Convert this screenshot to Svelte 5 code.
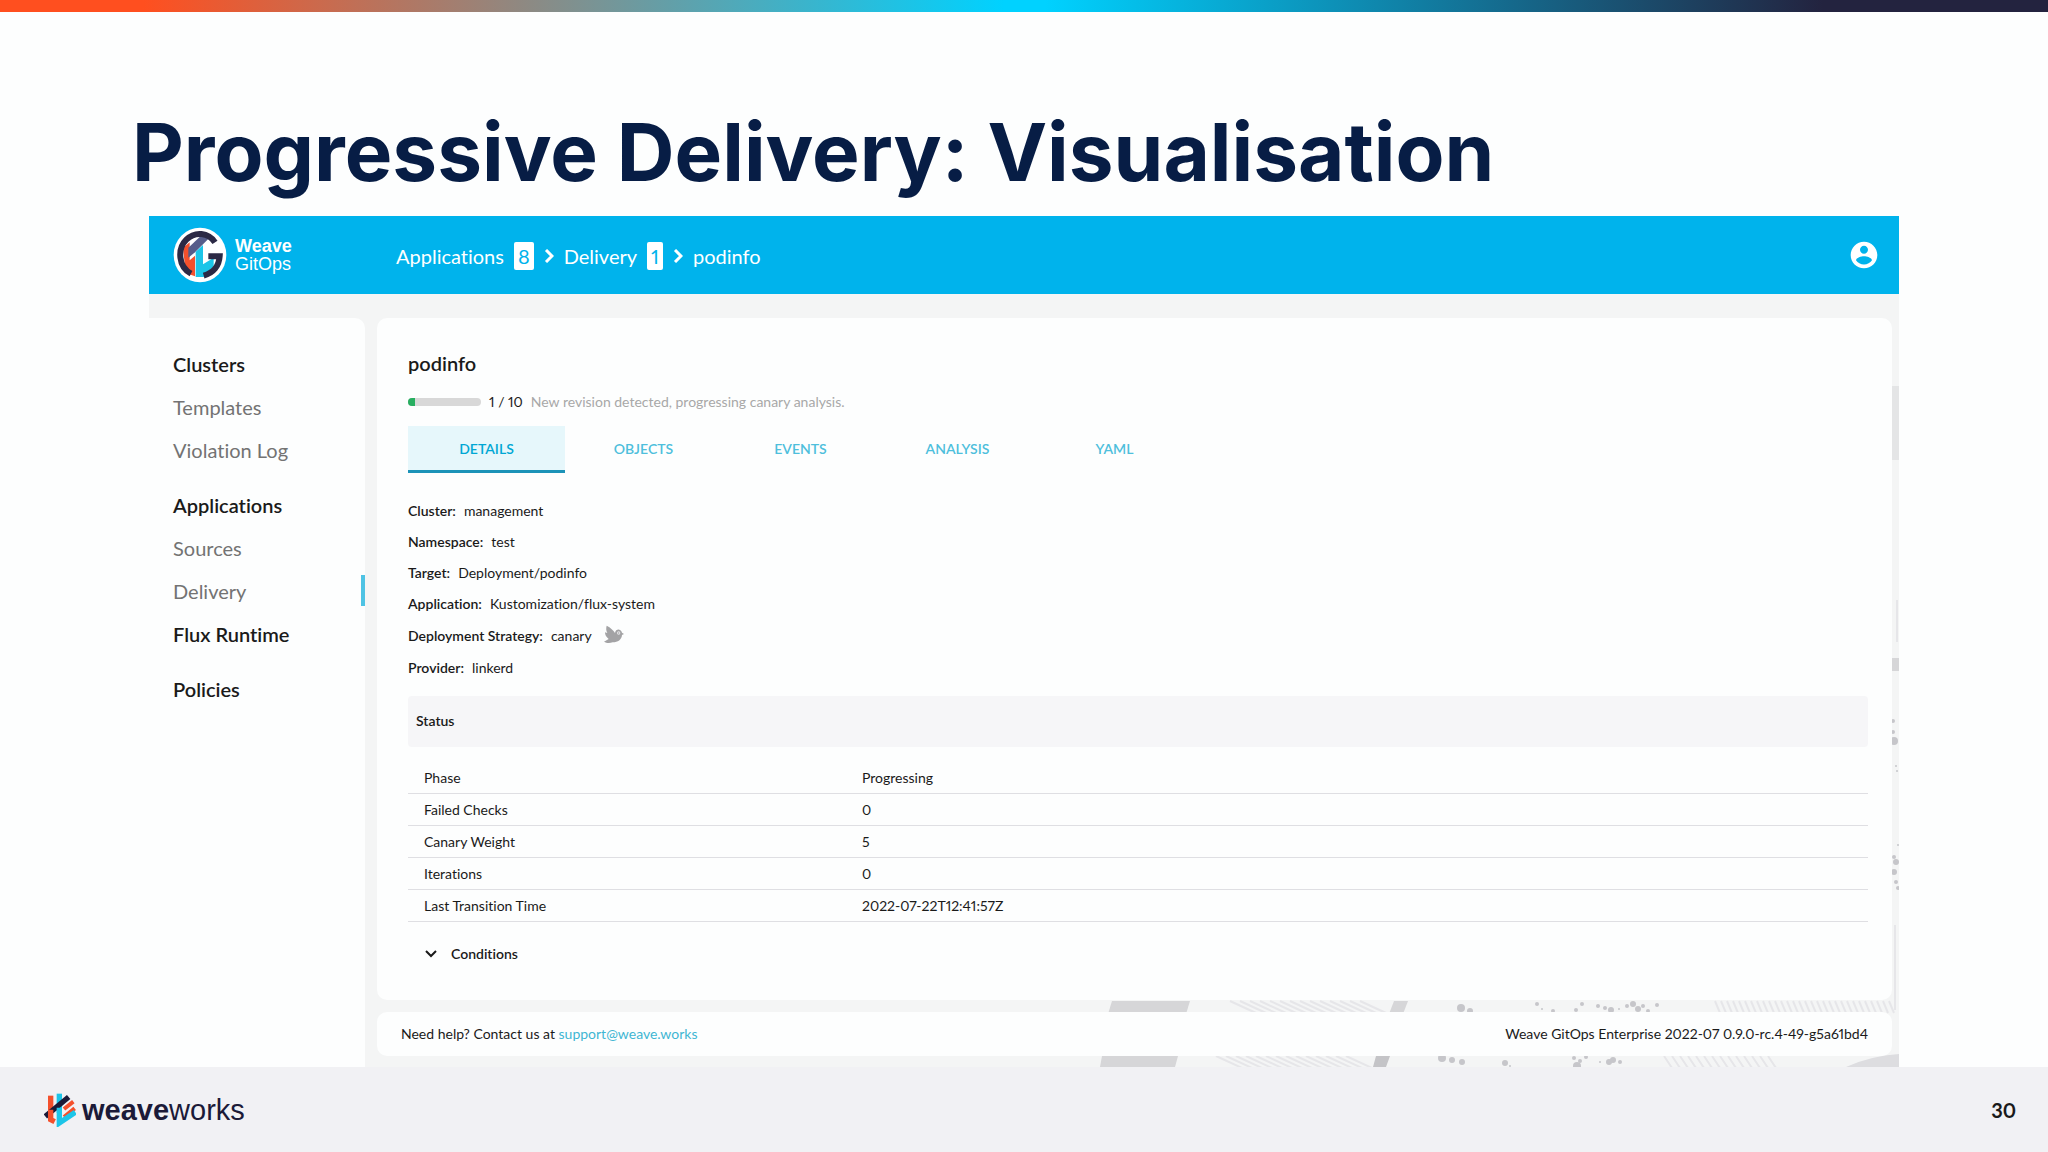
<script lang="ts">
  type NavItem = { label: string; heading?: boolean; active?: boolean };

  const nav: NavItem[][] = [
    [
      { label: "Clusters", heading: true },
      { label: "Templates" },
      { label: "Violation Log" },
    ],
    [
      { label: "Applications", heading: true },
      { label: "Sources" },
      { label: "Delivery", active: true },
      { label: "Flux Runtime", heading: true },
    ],
    [{ label: "Policies", heading: true }],
  ];

  const tabs = ["DETAILS", "OBJECTS", "EVENTS", "ANALYSIS", "YAML"];

  const details = [
    ["Cluster", "management"],
    ["Namespace", "test"],
    ["Target", "Deployment/podinfo"],
    ["Application", "Kustomization/flux-system"],
    ["Deployment Strategy", "canary"],
    ["Provider", "linkerd"],
  ];

  const status = [
    ["Phase", "Progressing"],
    ["Failed Checks", "0"],
    ["Canary Weight", "5"],
    ["Iterations", "0"],
    ["Last Transition Time", "2022-07-22T12:41:57Z"],
  ];

  const step = 1;
  const steps = 10;

  const hatches = Array.from({ length: 14 }, (_, i) => 1230 + i * 10);
  const fineHatches = Array.from({ length: 30 }, (_, i) => 1715 + i * 6);
  const lowerHatches = Array.from({ length: 14 }, (_, i) => 1664 + i * 8);
  const dots = [
    [1461, 1008, 4], [1470, 1011, 3], [1537, 1004, 2], [1542, 1009, 1],
    [1553, 1011, 2], [1576, 1010, 2], [1582, 1004, 2], [1598, 1006, 2],
    [1605, 1008, 2], [1611, 1010, 3], [1619, 1009, 1], [1627, 1006, 2],
    [1633, 1004, 3], [1638, 1009, 3], [1643, 1006, 2], [1648, 1011, 2],
    [1657, 1005, 2], [1442, 1058, 4], [1452, 1060, 3], [1462, 1062, 3],
    [1505, 1063, 3], [1510, 1066, 1], [1574, 1058, 2], [1580, 1061, 2],
    [1577, 1066, 4], [1586, 1057, 2], [1600, 1062, 1], [1609, 1062, 3],
    [1613, 1060, 3], [1620, 1062, 2], [1893, 721, 2], [1893, 732, 2],
    [1894, 741, 4], [1896, 766, 1], [1897, 771, 1], [1894, 857, 2],
    [1896, 862, 3], [1894, 872, 3], [1896, 882, 2], [1898, 888, 2],
    [1898, 845, 1],
  ];

  let selected = $state("DETAILS");
</script>

<div class="slide">
  <div class="stripe"></div>
  <h1>Progressive Delivery: Visualisation</h1>

  <div class="app">
    <header>
      <a class="brand" href="#home">
        <svg width="54" height="56" viewBox="0 0 162 168" aria-hidden="true">
          <ellipse cx="81" cy="84" rx="79" ry="82" fill="#fff" />
          <path d="M30 62 50 46V100L66 86V148L38 138Z" fill="#f4502c" />
          <path d="M46 92V62L84 26 108 34 66 76Z" fill="#565d8a" />
          <path d="M68 74 90 54V112L122 92V118L92 150H68Z" fill="#1cc5e8" />
          <path
            d="M126 46C106 16 66 12 40 38C12 66 16 120 54 140M92 146C122 138 138 116 140 88H106"
            fill="none"
            stroke="#2b2945"
            stroke-width="18"
          />
        </svg>
        <span class="brand-name"><b>Weave</b><span>GitOps</span></span>
      </a>
      <nav class="crumbs" aria-label="Breadcrumb">
        <a href="#applications">Applications</a>
        <span class="count">8</span>
        {@render chevron()}
        <a href="#delivery">Delivery</a>
        <span class="count">1</span>
        {@render chevron()}
        <span>podinfo</span>
      </nav>
      <button class="user" aria-label="Account">
        <svg width="32" height="32" viewBox="0 0 24 24">
          <path
            fill="#fff"
            d="M12 2C6.480 2 2 6.480 2 12s4.480 10 10 10 10-4.480 10-10S17.520 2 12 2zm0 3c1.660 0 3 1.340 3 3s-1.340 3-3 3-3-1.340-3-3 1.340-3 3-3zm0 14.200c-2.500 0-4.710-1.280-6-3.220.03-1.990 4-3.080 6-3.080 1.990 0 5.970 1.090 6 3.080-1.290 1.940-3.500 3.220-6 3.220z"
          />
        </svg>
      </button>
    </header>

    <svg class="pattern" width="800" height="700" viewBox="1099 367 800 700" aria-hidden="true">
      <g stroke="#e6e6e9" stroke-width="2">
        {#each hatches as x}
          <path d="M{x} 1001l26 12M{x - 14} 1056l26 12" />
        {/each}
        {#each fineHatches as x}
          <path d="M{x} 1001l5 12" />
        {/each}
        {#each lowerHatches as x}
          <path d="M{x} 1056l8 12" />
        {/each}
        <path d="M1897 600V642M1895 925V1010" />
      </g>
      <g fill="#d6d6d8">
        <path d="M1112 1001H1190L1186 1014H1108Z" />
        <path d="M1102 1056H1178L1175 1067H1100Z" />
        <path d="M1394 1001H1408L1403 1014H1389Z" />
        <path fill="#c4c4c7" d="M1376 1056H1390L1386 1067H1373Z" />
        <path fill="#e4e5e6" d="M1892 386H1899V460H1892Z" />
        <path d="M1892 658H1899V671H1892Z" />
        <path fill="#dddde0" d="M1846 1067Q1870 1056 1899 1054V1067Z" />
      </g>
      <g fill="#c6c6ca">
        {#each dots as [x, y, r]}
          <circle cx={x} cy={y} {r} />
        {/each}
      </g>
    </svg>

    <div class="body">
      <aside>
        {#each nav as group}
          <ul>
            {#each group as item}
              <li class:heading={item.heading} class:active={item.active}>
                <a href="#{item.label}">{item.label}</a>
              </li>
            {/each}
          </ul>
        {/each}
      </aside>

      <div class="content">
        <main>
          <h2>podinfo</h2>
          <div class="progress">
            <div class="track">
              <div class="fill" style="width: {(step / steps) * 100}%"></div>
            </div>
            <span>{step} / {steps}</span>
            <span class="message">New revision detected, progressing canary analysis.</span>
          </div>

          <div class="tabs" role="tablist">
            {#each tabs as tab}
              <button
                role="tab"
                aria-selected={selected === tab}
                class:selected={selected === tab}
                onclick={() => (selected = tab)}>{tab}</button
              >
            {/each}
          </div>

          <dl>
            {#each details as [name, value]}
              <div>
                <dt>{name}:</dt>
                <dd>{value}</dd>
                {#if value === "canary"}
                  <svg width="20" height="22" viewBox="0 -2 60 66" aria-hidden="true">
                    <path
                      fill="#a3a3a5"
                      d="M8 0C20 6 28 14 33 22C34 14 40 11 46 12C51 13 53 17 54 21L60 25L54 28C53 42 42 50 26 50C16 53 7 52 0 48L14 40C6 34 3 27 3 20L10 22C6 15 6 7 8 0Z"
                    />
                    <circle cx="44" cy="22" r="5" fill="#e6e6e8" />
                    <circle cx="44" cy="22" r="2" fill="#a3a3a5" />
                  </svg>
                {/if}
              </div>
            {/each}
          </dl>

          <h3>Status</h3>
          <table>
            <tbody>
              {#each status as [name, value]}
                <tr>
                  <th scope="row">{name}</th>
                  <td>{value}</td>
                </tr>
              {/each}
            </tbody>
          </table>

          <button class="conditions">
            <svg width="14" height="10" viewBox="0 0 14 10" aria-hidden="true">
              <path d="M2 2 7 7 12 2" fill="none" stroke="#1a1a1a" stroke-width="2" />
            </svg>
            Conditions
          </button>
        </main>

        <footer>
          <span>Need help? Contact us at <a href="mailto:support@weave.works">support@weave.works</a></span>
          <span>Weave GitOps Enterprise 2022-07 0.9.0-rc.4-49-g5a61bd4</span>
        </footer>
      </div>
    </div>
  </div>

  <div class="bottom">
    <div class="logo">
      <svg width="32" height="34" viewBox="0 0 96 102" aria-hidden="true">
        <g fill="none" stroke-width="16">
          <path d="M20 8V60" stroke="#f4502c" />
          <path d="M46 2V60" stroke="#1cc5e8" />
          <path d="M60 48 88 26M60 72 92 46" stroke="#f4502c" stroke-width="12" />
          <path d="M4 70 74 12" stroke="#1b1a38" />
          <path d="M20 50V80L32 86" stroke="#f4502c" />
          <path d="M46 44V90L94 58" stroke="#1cc5e8" />
        </g>
      </svg>
      <span><b>weave</b>works</span>
    </div>
    <span class="page">30</span>
  </div>
</div>

{#snippet chevron()}
  <svg width="10" height="14" viewBox="0 0 10 14" aria-hidden="true">
    <path d="M2 1 8 7 2 13" fill="none" stroke="#fff" stroke-width="3" />
  </svg>
{/snippet}

<style>
  .slide {
    display: flex;
    flex-direction: column;
    min-height: 100vh;
    background: #fdfefe;
    color: #1a1a1a;
    font-family: Lato, sans-serif;
    font-size: 14px;
    line-height: 20px;
    font-variant-ligatures: none;
    font-variant-numeric: proportional-nums;
  }

  .stripe {
    height: 12px;
    background: linear-gradient(90deg, #ff4f1f 0%, #ff4f1f 7%, #00d2ff 49%, #00d2ff 51%, #23233f 89%);
  }

  h1 {
    margin: 88px 132px 12px;
    font-family: Inter, sans-serif;
    font-size: 80px;
    line-height: 104px;
    font-weight: 700;
    color: #071d45;
  }

  a {
    color: inherit;
    text-decoration: none;
  }

  button {
    border: none;
    padding: 0;
    background: none;
    font: inherit;
    color: inherit;
    cursor: pointer;
  }

  .app {
    position: relative;
    margin: 0 149px;
    background: #f4f5f5;
  }

  header {
    display: flex;
    align-items: center;
    height: 78px;
    padding: 0 19px 0 24px;
    background: #00b3ec;
    color: #fff;
  }

  .brand {
    display: flex;
    align-items: center;
    gap: 8px;
    width: 223px;
  }

  .brand-name {
    display: flex;
    flex-direction: column;
    font-family: "Liberation Sans", sans-serif;
    font-size: 18px;
    line-height: 18px;
  }

  .crumbs {
    display: flex;
    align-items: center;
    gap: 10px;
    flex: 1;
    padding-top: 2px;
    font-size: 20px;
    line-height: 28px;
  }

  .count {
    padding: 0 4px;
    border-radius: 2px;
    background: #fff;
    color: #00b3ec;
  }

  .user {
    display: flex;
  }

  .pattern {
    position: absolute;
    right: 0;
    bottom: 0;
  }

  .body {
    position: relative;
    display: flex;
    gap: 12px;
    padding-top: 24px;
  }

  aside {
    width: 216px;
    padding-top: 24px;
    box-sizing: border-box;
    border-radius: 0 10px 0 0;
    background: #fdfefe;
    font-size: 20px;
  }

  ul {
    margin: 0 0 12px;
    padding: 0;
    list-style: none;
  }

  li {
    display: flex;
    align-items: center;
    height: 43px;
    padding-left: 24px;
    color: #737373;
  }

  .heading {
    color: #1a1a1a;
    font-weight: 600;
  }

  .active::after {
    content: "";
    width: 4px;
    height: 31px;
    margin-left: auto;
    background: #4ec3e4;
  }

  .content {
    display: flex;
    flex-direction: column;
    gap: 12px;
    flex: 1;
    padding: 0 7px 11px 0;
  }

  main {
    padding: 31px 24px 36px 31px;
    border-radius: 10px;
    background: #fdfefe;
  }

  h2 {
    margin: 0;
    font-size: 20px;
    line-height: 28px;
    font-weight: 600;
  }

  .progress {
    display: flex;
    align-items: center;
    gap: 8px;
    margin-top: 15px;
  }

  .track {
    width: 73px;
    height: 8px;
    border-radius: 4px;
    overflow: hidden;
    background: #d8d8d8;
  }

  .fill {
    height: 100%;
    background: #27ae60;
  }

  .message {
    color: #a8a8a8;
  }

  .tabs {
    display: flex;
    margin-top: 14px;
  }

  .tabs button {
    width: 157px;
    height: 47px;
    padding-top: 2px;
    border-bottom: 3px solid transparent;
    color: #4ebfdc;
    font-weight: 600;
  }

  .tabs .selected {
    border-color: #1c93b8;
    background: #e6f7fb;
    color: #00a7d4;
  }

  dl {
    display: flex;
    flex-direction: column;
    gap: 11px;
    margin: 28px 0 18px;
  }

  dl div {
    display: flex;
    align-items: center;
    gap: 8px;
  }

  dt {
    font-weight: 600;
  }

  dd {
    margin: 0;
  }

  dl svg {
    margin-left: 4px;
  }

  h3 {
    margin: 0;
    padding: 15px 8px 16px;
    border-radius: 4px;
    background: #f6f6f8;
    font-size: 14px;
    font-weight: 600;
  }

  table {
    width: 100%;
    margin-top: 15px;
    border-collapse: collapse;
  }

  th,
  td {
    width: 70%;
    height: 31px;
    padding: 0 16px;
    border-bottom: 1px solid #dfdfe3;
    font-weight: 400;
    text-align: left;
  }

  th {
    width: 30%;
    box-sizing: content-box;
  }

  .conditions {
    display: flex;
    align-items: center;
    gap: 13px;
    margin: 22px 0 0 16px;
    font-weight: 600;
  }

  footer {
    display: flex;
    justify-content: space-between;
    padding: 12px 24px;
    border-radius: 10px;
    background: #fdfefe;
  }

  footer a {
    color: #3fb6d3;
  }

  .bottom {
    display: flex;
    align-items: center;
    justify-content: space-between;
    flex: 1;
    padding: 0 32px 0 44px;
    background: #f1f1f4;
  }

  .logo {
    display: flex;
    align-items: center;
    gap: 6px;
    font-family: "Liberation Sans", sans-serif;
    font-size: 29px;
    line-height: 34px;
    color: #1b1a38;
  }

  .page {
    font-size: 20px;
    font-weight: 700;
  }
</style>
